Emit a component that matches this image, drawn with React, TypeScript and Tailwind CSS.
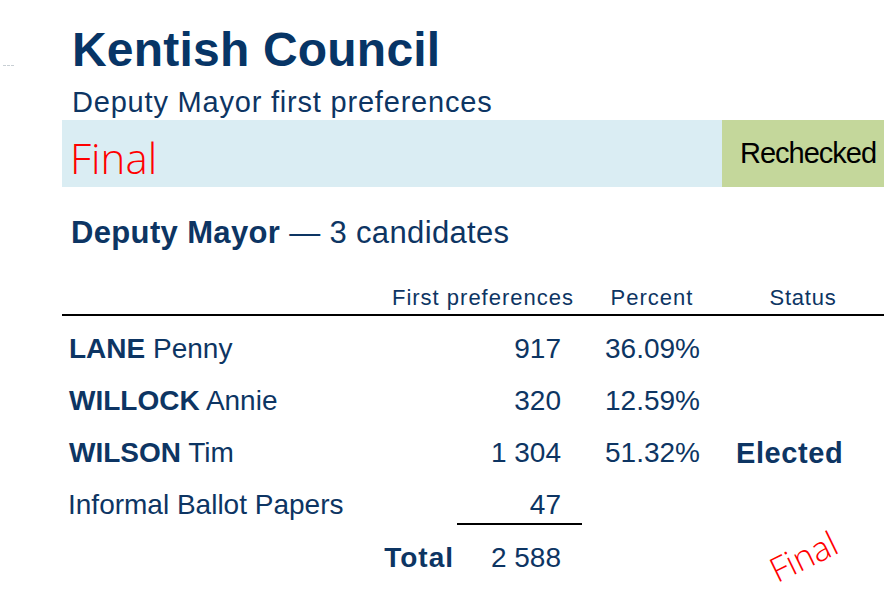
import React from "react";

const navy = "text-[#0d3563]";

type Row = { last?: string; first?: string; label?: string; votes: string; pct?: string; status?: string };

const rows: Row[] = [
  { last: "LANE", first: "Penny", votes: "917", pct: "36.09%" },
  { last: "WILLOCK", first: "Annie", votes: "320", pct: "12.59%" },
  { last: "WILSON", first: "Tim", votes: "1 304", pct: "51.32%", status: "Elected" },
];

export default function App() {
  return (
    <div
      className={`relative w-[885px] h-[615px] bg-white overflow-hidden ${navy}`}
      style={{ fontFamily: '"Liberation Sans", Arial, sans-serif' }}
    >
      <div className="absolute left-[3px] top-[65px] w-[11px] border-t border-dashed border-[#c8cfd4]" />

      <div className="pl-[72px] pt-[26px]">
        <h1 className="text-[48px] leading-[48px] font-bold tracking-[0.2px] text-[#073566]">Kentish Council</h1>
        <div className="mt-[12px] text-[29px] leading-[32px] tracking-[0.8px]">
          Deputy Mayor first preferences
        </div>
      </div>

      <div className="mt-[2px] ml-[62px] w-[822px] h-[67px] flex">
        <div className="w-[660px] bg-[#daedf3] pl-[8px] pt-[8px]">
          <span
            className="text-[42px] leading-[59px] font-light text-[#ff0000]"
            style={{ fontFamily: '"Open Sans", "DejaVu Sans", sans-serif' }}
          >
            Final
          </span>
        </div>
        <div className="w-[162px] bg-[#c4d79b] pl-[18px] text-[29px] leading-[67px] tracking-[-1px] text-black">
          Rechecked
        </div>
      </div>

      <div className="mt-[28px] ml-[71px] text-[31px] leading-[36px] tracking-[0.35px]">
        <span className="font-bold">Deputy Mayor</span> — 3 candidates
      </div>

      <div className="mt-[34px] ml-[62px] w-[822px]">
        <div className="grid grid-cols-[395px_125px_140px_162px] border-b-2 border-black pb-[3px] text-[22px] leading-[26px] tracking-[0.8px]">
          <div />
          <div className="flex justify-end pr-[8px] whitespace-nowrap tracking-[1px]">First preferences</div>
          <div className="flex justify-center whitespace-nowrap tracking-[1px]">Percent</div>
          <div className="flex justify-center whitespace-nowrap">Status</div>
        </div>

        <div className="mt-[7px] text-[28px]">
          {rows.map((r) => (
            <div key={r.last} className="grid grid-cols-[395px_125px_140px_162px] h-[52px] leading-[52px]">
              <div className="pl-[7px] whitespace-nowrap">
                <span className="font-bold">{r.last}</span> {r.first}
              </div>
              <div className="text-right pr-[21px]">{r.votes}</div>
              <div className="pl-[23px]">{r.pct}</div>
              <div className="pl-[14px] font-bold text-[29px] tracking-[0.6px]">{r.status}</div>
            </div>
          ))}
          <div className="grid grid-cols-[395px_125px_140px_162px] h-[46px] leading-[36px]">
            <div className="pl-[6px] pt-[8px] whitespace-nowrap">Informal Ballot Papers</div>
            <div className="text-right pr-[21px] pt-[8px] border-b-2 border-black">47</div>
            <div />
            <div />
          </div>
          <div className="grid grid-cols-[395px_125px_140px_162px] h-[52px] leading-[52px] mt-[7px]">
            <div className="text-right pr-[3px] font-bold tracking-[1px]">Total</div>
            <div className="text-right pr-[21px]">2 588</div>
            <div />
            <div />
          </div>
        </div>
      </div>

      <span
        className="absolute left-[768px] top-[539px] text-[34px] leading-[34px] font-light text-[#ff0000] -rotate-[26deg] origin-center"
        style={{ fontFamily: '"Open Sans", "DejaVu Sans", sans-serif' }}
      >
        Final
      </span>
    </div>
  );
}
